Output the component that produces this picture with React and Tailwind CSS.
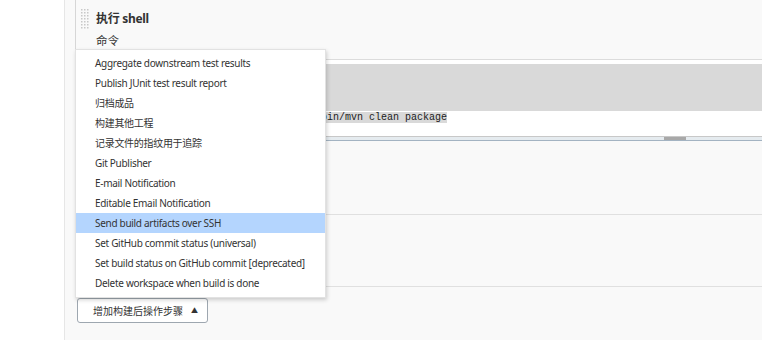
import React from 'react';

const items = [
  'Aggregate downstream test results',
  'Publish JUnit test result report',
  '归档成品',
  '构建其他工程',
  '记录文件的指纹用于追踪',
  'Git Publisher',
  'E-mail Notification',
  'Editable Email Notification',
  'Send build artifacts over SSH',
  'Set GitHub commit status (universal)',
  'Set build status on GitHub commit [deprecated]',
  'Delete workspace when build is done',
];

function DragHandle() {
  const dots = [];
  for (let r = 0; r < 7; r++) {
    for (let c = 0; c < 3; c++) {
      dots.push(<rect key={r + '-' + c} x={c * 3} y={r * 3} width="1.5" height="1.5" fill="#c8c8c8" />);
    }
  }
  return (
    <svg width="8" height="20" viewBox="0 0 8 20" className="shrink-0">
      {dots}
    </svg>
  );
}

export default function App() {
  return (
    <div className="relative w-[762px] h-[340px] flex overflow-hidden text-[#333] font-['Noto_Sans','Noto_Sans_CJK_SC',sans-serif]">
      {/* side bar */}
      <div className="w-[65px] shrink-0 bg-white border-r border-[#e6e6e6]" />

      {/* main */}
      <div className="flex-1 min-w-0 bg-[#f9f9f9] pl-[10px]">
        {/* build step header */}
        <div className="h-[59px] border-l border-[#d6d6d6] pl-[5px] pt-[9px]">
          <div className="flex items-center gap-[7px]">
            <DragHandle />
            <span className="text-[12px] font-bold leading-[20px] tracking-[-0.3px]">执行 shell</span>
          </div>
          <div className="pl-[15px] mt-[5px] text-[11.5px] leading-[14px]">命令</div>
        </div>

        {/* textarea */}
        <div className="w-[1200px] bg-white border-t border-[#dcdcdc] pt-[4px]">
          <div className="h-[47px] bg-[#d9d9d9]" />
          <div className="h-[13px] font-['Liberation_Mono',monospace] text-[10px] leading-[13px] whitespace-pre text-[#222]">
            <span className="bg-[#d9d9d9]">/var/jenkins_home/tools/maven/apache-mvn/bin/mvn clean package</span>
          </div>
          <div className="h-[12px]" />
          <div className="border-t border-[#c8c8c8] h-[5px] bg-[#e5ebef] border-b border-b-[#a3b3c2] flex justify-center">
            <div className="w-[22px] h-[3px] bg-[#a8a8a8]" />
          </div>
        </div>

        <div className="h-[74px] border-b border-[#e0e0e0]" />
        <div className="h-[72px] border-b border-[#e0e0e0]" />

        <div className="pt-[11px] pl-[2px]">
          <button className="w-[131px] h-[25px] bg-white border border-[#9ea7b0] rounded-[3px] flex items-center pl-[15px] gap-[8px] text-[10px] leading-[12px] text-[#333]">
            <span>增加构建后操作步骤</span>
            <span className="text-[7px]">▲</span>
          </button>
        </div>
      </div>

      {/* dropdown menu */}
      <div className="absolute left-[75px] top-[49px] w-[251px] bg-white border border-[#e2e2e2] shadow-[1px_2px_4px_rgba(0,0,0,0.18)] pt-[3px] pb-[4px]">
        {items.map((t, i) => (
          <div
            key={t}
            className={
              'h-[20px] pl-[19px] flex items-center text-[10px] tracking-[-0.3px] whitespace-nowrap ' +
              (i === 8 ? 'bg-[#b4d5fe]' : '')
            }
          >
            {t}
          </div>
        ))}
      </div>
    </div>
  );
}
